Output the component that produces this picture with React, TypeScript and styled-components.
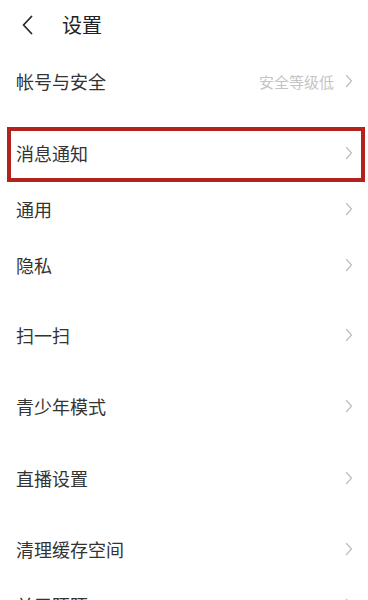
import React from "react";
import styled, { createGlobalStyle, css } from "styled-components";

const Global = createGlobalStyle`
  html, body { margin: 0; padding: 0; background: #ffffff; }
  body { font-family: "Noto Sans CJK SC", "Noto Sans", sans-serif; }
`;

const Page = styled.div`
  width: 368px;
  height: 600px;
  overflow: hidden;
  background: #ffffff;
  display: flex;
  flex-direction: column;
`;

const Header = styled.header`
  height: 50px;
  display: flex;
  align-items: center;
  padding-left: 22px;
  flex-shrink: 0;
`;

const BackButton = styled.button`
  border: 0;
  background: none;
  padding: 0;
  width: 12px;
  height: 20px;
  display: flex;
  align-items: center;
  justify-content: flex-start;
  cursor: pointer;
`;

const Title = styled.h1`
  margin: 0 0 0 28px;
  font-size: 20px;
  font-weight: 400;
  color: #222222;
  line-height: 1;
`;

const List = styled.ul`
  list-style: none;
  margin: 0;
  padding: 0;
  display: flex;
  flex-direction: column;
  flex-shrink: 0;
`;

const Row = styled.li<{ $top: number; $highlight?: boolean }>`
  position: relative;
  height: 56px;
  margin-top: ${(p) => p.$top}px;
  display: flex;
  align-items: center;
  padding: 0 15px 0 16px;
  flex-shrink: 0;
  ${(p) =>
    p.$highlight &&
    css`
      &::after {
        content: "";
        position: absolute;
        left: 7px;
        right: 3px;
        top: 2px;
        bottom: -1px;
        border: 4.5px solid #b3231d;
        pointer-events: none;
      }
    `}
`;

const Label = styled.span`
  flex: 1;
  font-size: 18px;
  color: #333333;
  line-height: 1;
  white-space: nowrap;
`;

const Hint = styled.span`
  font-size: 15px;
  color: #c4c4c4;
  margin-right: 11px;
  line-height: 1;
`;

const Chevron = () => (
  <svg width="8" height="14" viewBox="0 0 8 14">
    <polyline
      points="1.5,1.5 6.5,7 1.5,12.5"
      fill="none"
      stroke="#c2c2c2"
      strokeWidth="1.4"
      strokeLinecap="round"
      strokeLinejoin="round"
    />
  </svg>
);

const BackIcon = () => (
  <svg width="11" height="20" viewBox="0 0 11 20">
    <polyline
      points="9.5,1.5 1.5,10 9.5,18.5"
      fill="none"
      stroke="#2a2a2a"
      strokeWidth="1.8"
      strokeLinecap="round"
      strokeLinejoin="round"
    />
  </svg>
);

type Item = { label: string; top: number; hint?: string; highlight?: boolean };

const items: Item[] = [
  { label: "帐号与安全", top: 3, hint: "安全等级低" },
  { label: "消息通知", top: 16, highlight: true },
  { label: "通用", top: 0 },
  { label: "隐私", top: 0 },
  { label: "扫一扫", top: 14 },
  { label: "青少年模式", top: 15 },
  { label: "直播设置", top: 16 },
  { label: "清理缓存空间", top: 15 },
  { label: "关于陌陌", top: 0 },
];

export default function App() {
  return (
    <>
      <Global />
      <Page>
        <Header>
          <BackButton aria-label="返回">
            <BackIcon />
          </BackButton>
          <Title>设置</Title>
        </Header>
        <List>
          {items.map((it) => (
            <Row key={it.label} $top={it.top} $highlight={it.highlight}>
              <Label>{it.label}</Label>
              {it.hint && <Hint>{it.hint}</Hint>}
              <Chevron />
            </Row>
          ))}
        </List>
      </Page>
    </>
  );
}
